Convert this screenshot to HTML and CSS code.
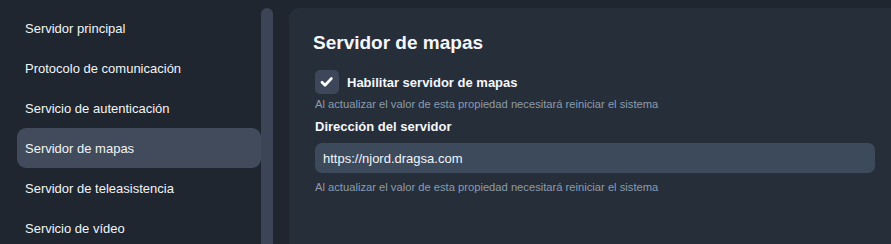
FILE: index.html
```html
<!DOCTYPE html>
<html lang="es">
<head>
<meta charset="utf-8">
<title>Servidor de mapas</title>
<link rel="stylesheet" href="styles.css">
</head>
<body>
<div class="layout">
  <aside class="sidebar">
    <nav class="nav">
      <a class="nav-item">Servidor principal</a>
      <a class="nav-item">Protocolo de comunicación</a>
      <a class="nav-item">Servicio de autenticación</a>
      <a class="nav-item active">Servidor de mapas</a>
      <a class="nav-item">Servidor de teleasistencia</a>
      <a class="nav-item">Servicio de vídeo</a>
    </nav>
    <div class="scrollbar"><div class="thumb"></div></div>
  </aside>
  <main class="panel">
    <h1 class="title">Servidor de mapas</h1>
    <div class="form">
      <label class="check-row">
        <span class="checkbox">
          <svg width="24" height="24" viewBox="0 0 24 24"><path d="M7 12.2 L10 15.2 L16.3 8.6" fill="none" stroke="#fff" stroke-width="2.8" stroke-linecap="round" stroke-linejoin="round"/></svg>
        </span>
        <span class="check-label">Habilitar servidor de mapas</span>
      </label>
      <p class="hint hint-first">Al actualizar el valor de esta propiedad necesitará reiniciar el sistema</p>
      <div class="field-label">Dirección del servidor</div>
      <div class="input">https://njord.dragsa.com</div>
      <p class="hint hint-second">Al actualizar el valor de esta propiedad necesitará reiniciar el sistema</p>
    </div>
  </main>
</div>
</body>
</html>
```
FILE: styles.css
```css
html, body {
  margin: 0;
  padding: 0;
  height: 100%;
  background: #1f2630;
  font-family: "Liberation Sans", Arial, sans-serif;
  color: #f2f4f7;
  overflow: hidden;
}

.layout {
  display: flex;
  height: 100%;
  padding-top: 8px;
  box-sizing: border-box;
  gap: 16px;
}

.sidebar {
  display: flex;
  width: 273px;
  flex-shrink: 0;
  padding-left: 17px;
  box-sizing: border-box;
}

.nav {
  display: flex;
  flex-direction: column;
  width: 244px;
}

.nav-item {
  display: flex;
  align-items: center;
  flex-shrink: 0;
  height: 40px;
  padding-left: 8px;
  font-size: 13px;
  color: #f2f4f7;
  border-radius: 9px;
}

.nav-item.active {
  background: #414b5b;
}

.scrollbar {
  width: 12px;
  display: flex;
}

.thumb {
  flex: 1;
  background: #3b4555;
  border-radius: 6px 6px 0 0;
}

.panel {
  flex: 1;
  background: #262e3a;
  border-radius: 10px 0 0 0;
  padding: 23px 16px 0 24px;
}

.title {
  margin: 0;
  font-size: 19px;
  line-height: 24px;
  font-weight: bold;
  color: #f5f7fa;
}

.form {
  padding-left: 2px;
  display: flex;
  flex-direction: column;
}

.check-row {
  display: flex;
  align-items: center;
  gap: 8px;
  margin-top: 15px;
  height: 24px;
}

.checkbox {
  width: 24px;
  height: 24px;
  border-radius: 5px;
  background: #3d4759;
  display: flex;
}

.check-label {
  font-size: 13px;
  font-weight: bold;
  color: #f5f7fa;
}

.hint {
  margin: 0;
  font-size: 11.2px;
  line-height: 14px;
  color: #8c9cae;
}

.hint-first {
  margin-top: 3px;
}

.field-label {
  margin-top: 8px;
  font-size: 13px;
  line-height: 16px;
  font-weight: bold;
  color: #f5f7fa;
}

.input {
  margin-top: 8px;
  height: 30px;
  display: flex;
  align-items: center;
  padding-left: 8px;
  border-radius: 7px;
  background: #3d4a5c;
  font-size: 13px;
  color: #f2f4f7;
}

.hint-second {
  margin-top: 7px;
}
```
